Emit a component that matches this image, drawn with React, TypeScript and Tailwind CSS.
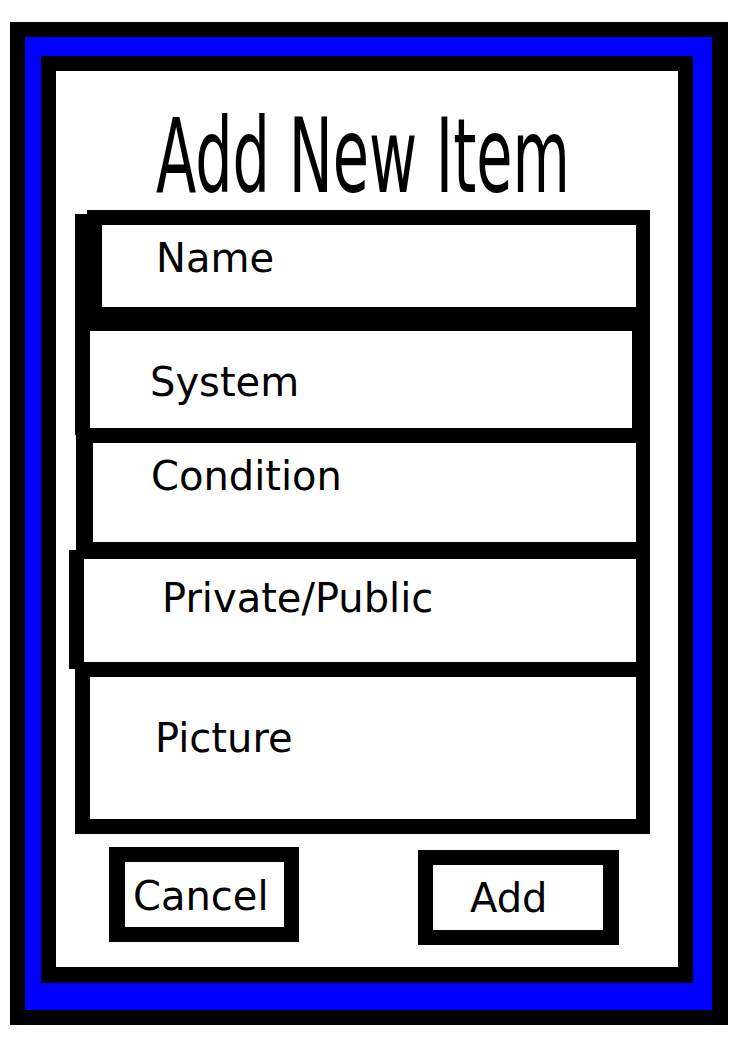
import React from "react";

const font = { fontFamily: '"DejaVu Sans", "Liberation Sans", sans-serif' };

export default function App() {
  return (
    <div className="min-h-[1053px] w-full bg-white pl-[10px] pt-[22px]" style={font}>
      <div className="h-[1003px] w-[718px] border-b-[15px] border-l-[15px] border-r-[16px] border-t-[15px] border-black bg-[#0000ff]">
        <div className="h-full w-full border-b-[27px] border-l-[16px] border-r-[19px] border-t-[19px] border-[#0000ff]">
          <div className="h-full w-full border-b-[16px] border-l-[15px] border-r-[15px] border-t-[15px] border-black bg-white">
            <div className="flex h-full w-full flex-col text-black">
              {/* Title */}
              <div className="mt-[33px] h-[104px] w-[520px] pl-[100px]">
                <span className="mr-[-318px] inline-block origin-left scale-x-[0.566] whitespace-nowrap text-[104px] leading-[104px]">
                  Add New Item
                </span>
              </div>

              {/* Name */}
              <div className="relative ml-[19px] mt-[2px] h-[109px] w-[575px] border-b-[12px] border-l-[27px] border-r-[14px] border-t-[15px] border-black pl-[54px] pt-[13px]">
                <span className="absolute left-[-27px] top-[-15px] h-[4px] w-[12px] bg-white" />
                <div className="text-[40px] leading-[40px]">Name</div>
              </div>

              {/* System */}
              <div className="ml-[19px] h-[116px] w-[575px] border-b-[7px] border-l-[15px] border-r-[18px] border-t-[12px] border-black pl-[60px] pt-[31px]">
                <div className="text-[40px] leading-[40px]">System</div>
              </div>

              {/* Condition */}
              <div className="ml-[20px] h-[115px] w-[574px] border-b-[8px] border-l-[17px] border-r-[14px] border-t-[8px] border-black pl-[58px] pt-[13px]">
                <div className="text-[40px] leading-[40px]">Condition</div>
              </div>

              {/* Private/Public */}
              <div className="ml-[13px] h-[119px] w-[581px] border-b-[7px] border-l-[15px] border-r-[14px] border-t-[9px] border-black pl-[78px] pt-[19px]">
                <div className="text-[40px] leading-[40px]">Private/Public</div>
              </div>

              {/* Picture */}
              <div className="ml-[19px] h-[165px] w-[575px] border-b-[15px] border-l-[15px] border-r-[14px] border-t-[8px] border-black pl-[65px] pt-[41px]">
                <div className="text-[40px] leading-[40px]">Picture</div>
              </div>

              {/* Buttons */}
              <div className="flex items-start">
                <div className="ml-[53px] mt-[13px] h-[95px] w-[190px] border-b-[15px] border-l-[16px] border-r-[15px] border-t-[15px] border-black pl-[8px] pt-[14px]">
                  <div className="text-[40px] leading-[40px]">Cancel</div>
                </div>
                <div className="ml-[119px] mt-[16px] h-[95px] w-[201px] border-b-[15px] border-l-[15px] border-r-[16px] border-t-[15px] border-black pl-[37px] pt-[13px]">
                  <div className="text-[40px] leading-[40px]">Add</div>
                </div>
              </div>
            </div>
          </div>
        </div>
      </div>
    </div>
  );
}
